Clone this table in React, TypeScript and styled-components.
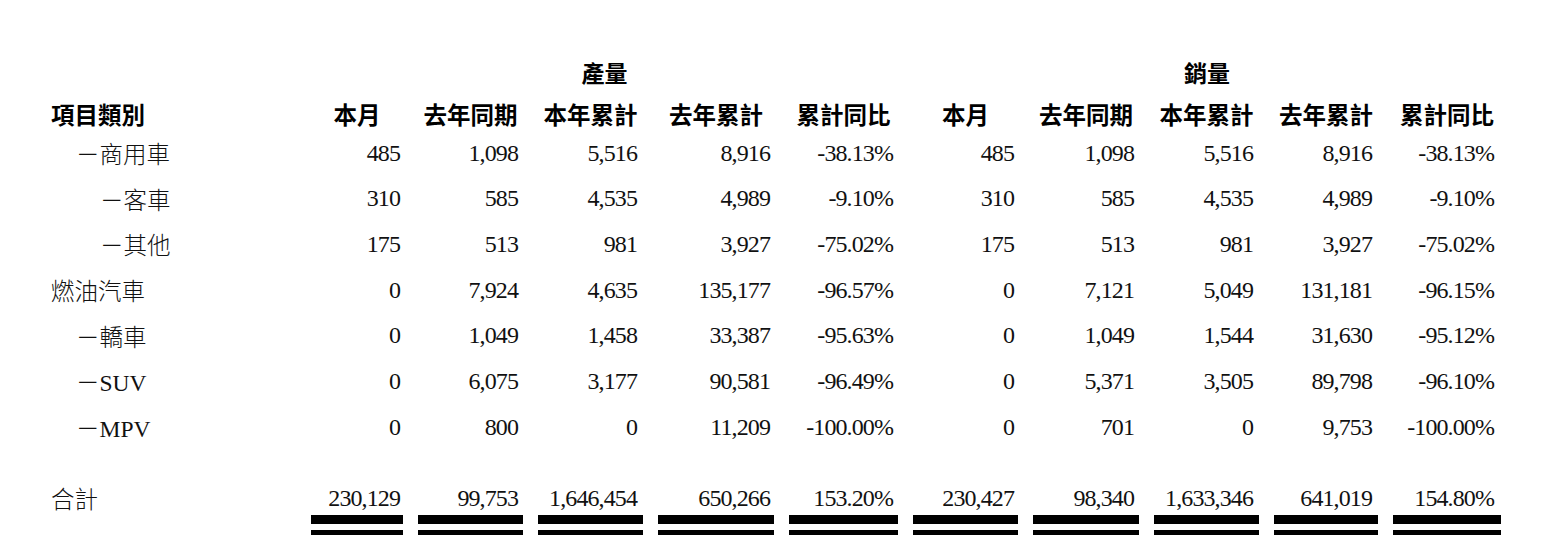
import React from 'react';
import styled, { createGlobalStyle } from 'styled-components';

const GlobalStyle = createGlobalStyle`
  html, body {
    margin: 0;
    padding: 0;
    background: #fff;
  }
`;

const COLUMNS = '245px 92px 105px 105px 116px 109px 105px 106px 105px 104px 108px';

// right inset of the figures in each of the ten number columns
const INSETS = [3, 5, 6, 4, 5, 4, 5, 6, 6, 7];

const Sheet = styled.div`
  padding: 52px 0 0 51px;
  color: #111;
  font-family: 'Liberation Serif', 'Noto Sans CJK TC', serif;
`;

const Row = styled.div<{ $height: number; $top?: number; $padTop?: number }>`
  display: grid;
  grid-template-columns: ${COLUMNS};
  column-gap: 15px;
  align-items: center;
  height: ${({ $height }) => $height}px;
  margin-top: ${({ $top }) => $top ?? 0}px;
  padding-top: ${({ $padTop }) => $padTop ?? 0}px;
  box-sizing: border-box;
`;

const GroupTitle = styled.div<{ $col: string }>`
  grid-column: ${({ $col }) => $col};
  text-align: center;
  font-family: 'Noto Sans CJK TC', sans-serif;
  font-weight: 700;
  font-size: 23px;
  line-height: 1;
  color: #000;
`;

const HeadCell = styled.div<{ $left?: boolean }>`
  text-align: ${({ $left }) => ($left ? 'left' : 'center')};
  font-family: 'Noto Sans CJK TC', sans-serif;
  font-weight: 700;
  font-size: 23.5px;
  line-height: 1;
  color: #000;
  white-space: nowrap;
`;

const Label = styled.div<{ $level: number }>`
  padding-left: ${({ $level }) => ($level === 0 ? 0 : $level === 1 ? 25 : 49)}px;
  padding-top: 6px;
  font-family: 'Liberation Serif', 'Noto Sans CJK TC', serif;
  font-weight: 300;
  font-size: 23.5px;
  line-height: 1;
  white-space: nowrap;
`;

const Num = styled.div<{ $inset: number }>`
  text-align: right;
  padding-right: ${({ $inset }) => $inset}px;
  font-size: 24px;
  letter-spacing: -0.9px;
  line-height: 1;
  white-space: nowrap;
`;

const DoubleRule = styled.div`
  height: 20px;
  box-sizing: border-box;
  border-top: 9px solid #000;
  border-bottom: 5px solid #000;
`;

type Line = {
  label: string;
  level: number;
  values: string[];
};

const heads = ['本月', '去年同期', '本年累計', '去年累計', '累計同比'];

const lines: Line[] = [
  {
    label: '－商用車',
    level: 1,
    values: ['485', '1,098', '5,516', '8,916', '-38.13%', '485', '1,098', '5,516', '8,916', '-38.13%'],
  },
  {
    label: '－客車',
    level: 2,
    values: ['310', '585', '4,535', '4,989', '-9.10%', '310', '585', '4,535', '4,989', '-9.10%'],
  },
  {
    label: '－其他',
    level: 2,
    values: ['175', '513', '981', '3,927', '-75.02%', '175', '513', '981', '3,927', '-75.02%'],
  },
  {
    label: '燃油汽車',
    level: 0,
    values: ['0', '7,924', '4,635', '135,177', '-96.57%', '0', '7,121', '5,049', '131,181', '-96.15%'],
  },
  {
    label: '－轎車',
    level: 1,
    values: ['0', '1,049', '1,458', '33,387', '-95.63%', '0', '1,049', '1,544', '31,630', '-95.12%'],
  },
  {
    label: '－SUV',
    level: 1,
    values: ['0', '6,075', '3,177', '90,581', '-96.49%', '0', '5,371', '3,505', '89,798', '-96.10%'],
  },
  {
    label: '－MPV',
    level: 1,
    values: ['0', '800', '0', '11,209', '-100.00%', '0', '701', '0', '9,753', '-100.00%'],
  },
];

const totals = [
  '230,129', '99,753', '1,646,454', '650,266', '153.20%',
  '230,427', '98,340', '1,633,346', '641,019', '154.80%',
];

const App: React.FC = () => {
  return (
    <>
      <GlobalStyle />
      <Sheet>
        <Row $height={40}>
          <GroupTitle $col="2 / 7">產量</GroupTitle>
          <GroupTitle $col="7 / 12">銷量</GroupTitle>
        </Row>
        <Row $height={38} $padTop={8}>
          <HeadCell $left>項目類別</HeadCell>
          {[...heads, ...heads].map((h, i) => (
            <HeadCell key={i}>{h}</HeadCell>
          ))}
        </Row>
        {lines.map((line) => (
          <Row key={line.label} $height={45.67}>
            <Label $level={line.level}>{line.label}</Label>
            {line.values.map((v, i) => (
              <Num key={i} $inset={INSETS[i]}>{v}</Num>
            ))}
          </Row>
        ))}
        <Row $height={32} $top={32}>
          <Label $level={0}>合計</Label>
          {totals.map((v, i) => (
            <Num key={i} $inset={INSETS[i]}>{v}</Num>
          ))}
        </Row>
        <Row $height={20} $top={1}>
          <div />
          {totals.map((_, i) => (
            <DoubleRule key={i} />
          ))}
        </Row>
      </Sheet>
    </>
  );
};

export default App;
